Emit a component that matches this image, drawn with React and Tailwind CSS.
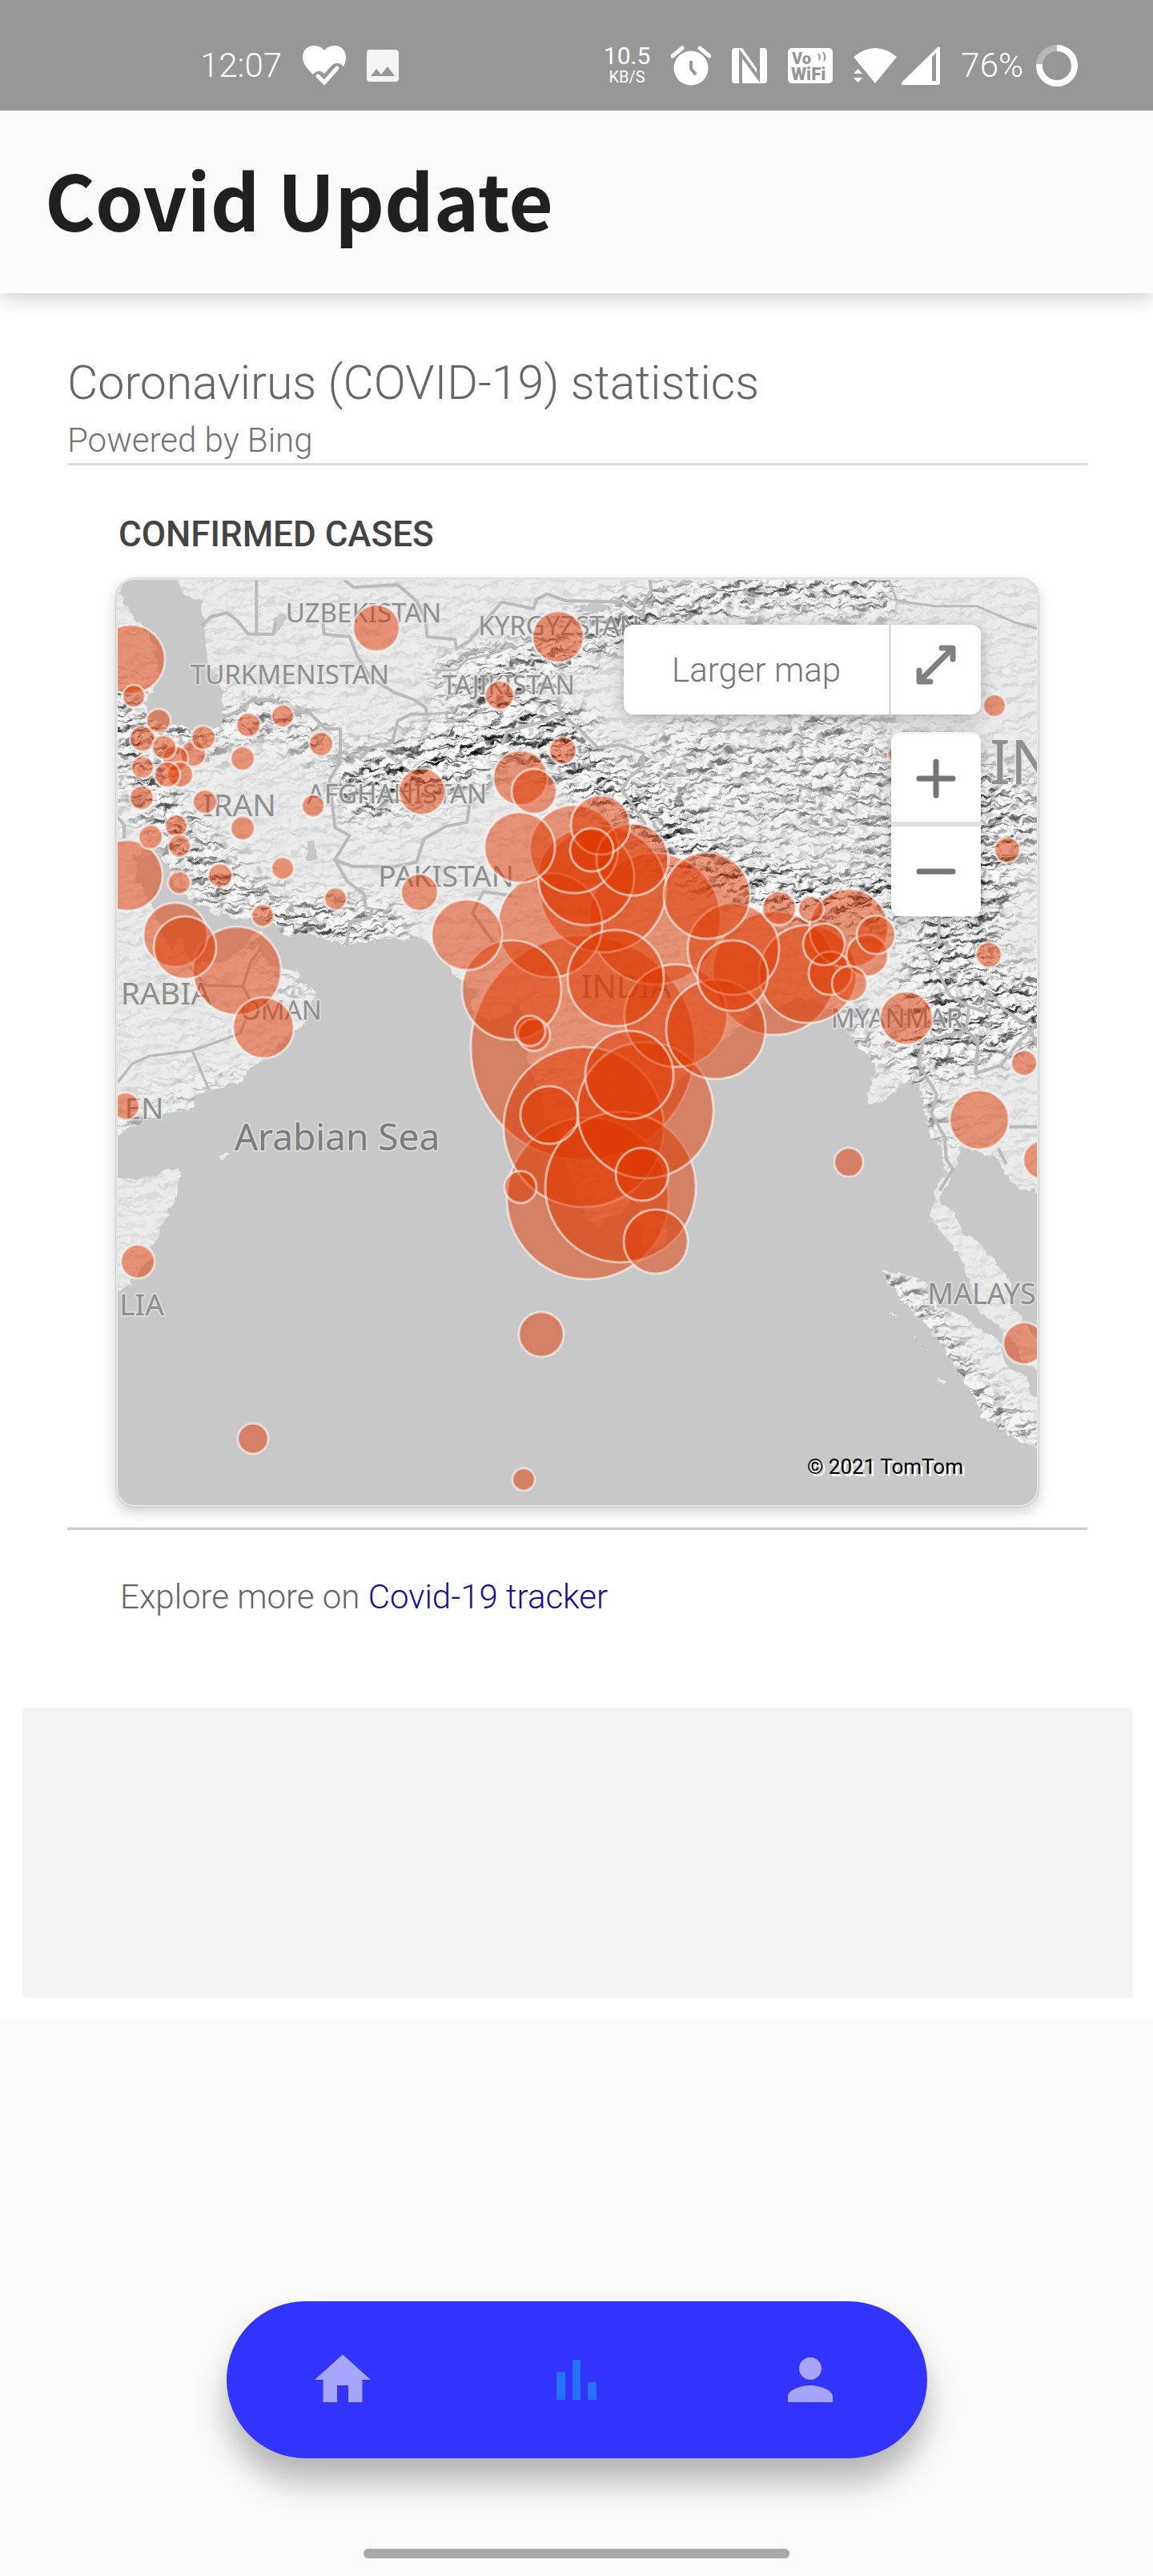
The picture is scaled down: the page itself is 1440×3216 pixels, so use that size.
import React from "react";
import { MdHome, MdPerson } from "react-icons/md";

/* [x, y, radius] of each case marker in map units */
const MARKERS = [
  [163, 823, 43], [167, 869, 14], [198, 900, 15], [178, 922, 16], [254, 921, 15], [241, 941, 16],
  [205, 933, 15], [219, 947, 16], [225, 967, 16], [209, 967, 16], [178, 958, 14], [177, 996, 15],
  [310, 905, 15], [353, 894, 14], [303, 947, 15], [401, 929, 15], [256, 1001, 15], [470, 784, 29],
  [624, 868, 18], [527, 988, 29], [391, 1006, 14], [303, 1034, 15], [220, 1031, 14], [224, 1056, 14],
  [188, 1045, 15], [159, 1093, 44], [224, 1102, 14], [275, 1093, 15], [353, 1084, 14], [419, 1122, 14],
  [328, 1143, 14], [524, 1114, 23], [219, 1167, 40], [231, 1183, 39], [296, 1212, 55], [329, 1283, 38],
  [157, 1381, 17], [172, 1575, 21], [697, 795, 32], [703, 937, 17], [650, 971, 34], [667, 988, 28],
  [649, 1058, 44], [717, 1060, 55], [750, 1030, 37], [739, 1061, 27], [732, 1095, 60], [790, 1073, 45],
  [753, 1110, 79], [818, 1147, 82], [687, 1155, 65], [583, 1167, 44], [883, 1118, 54], [1242, 881, 14],
  [1123, 941, 14], [1258, 1061, 16], [1235, 1192, 16], [973, 1134, 21], [1013, 1135, 16], [1060, 1159, 49],
  [1094, 1167, 24], [1083, 1193, 26], [1029, 1179, 26], [1037, 1215, 27], [1061, 1228, 22], [1009, 1216, 61],
  [967, 1215, 77], [915, 1218, 44], [1132, 1271, 33], [1279, 1327, 16], [1223, 1398, 37], [1060, 1451, 18],
  [1302, 1448, 24], [916, 1185, 57], [639, 1236, 62], [769, 1221, 60], [844, 1268, 64], [894, 1285, 62],
  [728, 1308, 140], [662, 1287, 19], [667, 1292, 20], [729, 1407, 100], [786, 1342, 55], [806, 1386, 85],
  [686, 1392, 36], [734, 1496, 101], [775, 1482, 94], [802, 1466, 33], [650, 1482, 20], [819, 1550, 40],
  [676, 1666, 28], [316, 1796, 19], [654, 1847, 14], [1279, 1677, 26],
].sort((a, b) => b[2] - a[2]);

/* [text, centre x, baseline y, size] */
const LABELS = [
  ["UZBEKISTAN", 454, 777, 33], ["TURKMENISTAN", 362, 854, 33], ["KYRGYZSTAN", 698, 793, 33],
  ["TAJIKISTAN", 635, 867, 32], ["IRAN", 299, 1019, 39], ["AFGHANISTAN", 496, 1003, 33],
  ["PAKISTAN", 557, 1107, 37], ["INDIA", 782, 1246, 40], ["RABIA", 207, 1254, 39],
  ["OMAN", 351, 1273, 33], ["EN", 180, 1397, 37], ["LIA", 177, 1642, 37],
  ["MYANMAR", 1120, 1283, 33], ["MALAYS", 1226, 1628, 36],
];

const LAND =
  "M130 700H1320V1487H1295L1273 1485 1260 1473 1247 1450 1230 1440 1213 1437 1200 1427 1195 1453 1187 1470 1173 1493 1177 1507 1193 1513 1197 1530 1203 1537 1230 1560 1244 1577 1261 1597 1265 1630 1280 1653 1300 1680V1712L1280 1700 1258 1667 1244 1653 1224 1640 1210 1597 1203 1577 1193 1560 1179 1543 1162 1523 1163 1507 1170 1483 1180 1463 1177 1433 1163 1420 1153 1383 1150 1360 1137 1346 1133 1350 1103 1378 1083 1375 1090 1345 1093 1330 1075 1310 1060 1290 1045 1262 1020 1250 1000 1245 970 1258 940 1250 935 1270 915 1292 890 1310 850 1345 815 1390 803 1430 797 1457 789 1493 780 1511 760 1521 747 1532 730 1518 717 1478 703 1439 683 1393 667 1350 657 1314 655 1290 647 1245 640 1265 610 1275 585 1255 600 1236 583 1230 570 1217 553 1200 540 1182 528 1172 473 1173 430 1180 393 1168 353 1165 338 1152 327 1140 313 1147 273 1143 240 1125 220 1107 210 1083 200 1065 165 1068 170 1097 187 1127 193 1143 205 1170 216 1186 220 1168 228 1172 232 1190 240 1200 273 1203 293 1193 313 1170 327 1163 322 1183 340 1207 370 1212 393 1240 380 1273 370 1287 353 1300 333 1323 307 1335 303 1350 263 1360 247 1367 242 1383 203 1392 173 1403 130 1425Z" +
  "M1101 1587L1141 1593 1155 1603 1165 1627 1196 1640 1224 1660 1248 1677 1262 1710 1284 1717 1286 1740 1310 1750V1816L1265 1797 1227 1767 1203 1720 1175 1680 1151 1647 1120 1617Z" +
  "M130 1474L187 1470 220 1457 225 1463 222 1487 203 1527 187 1570 167 1597 130 1625Z" +
  "M270 1443L288 1441 275 1449ZM1140 1668L1154 1680 1153 1682 1144 1676ZM1112 1640L1122 1646 1114 1645ZM1171 1714L1180 1730 1175 1729ZM797 1508L815 1512 833 1530 836 1548 822 1558 806 1556 800 1535Z";

const CASPIAN =
  "M150 720V737L160 760 172 777 190 800 200 830 190 862 180 880 187 897 212 905 237 909 280 905 278 890 278 860 258 827 257 790 252 750 227 740 222 720Z";

function CaseMap() {
  return (
    <svg viewBox="147 724 1148 1155" preserveAspectRatio="xMidYMid slice" className="block h-full w-full" role="img" aria-label="Map of confirmed cases">
      <defs>
        <clipPath id="land"><path d={LAND} /></clipPath>
        <filter id="coast" x="0" y="0" width="100%" height="100%">
          <feTurbulence type="fractalNoise" baseFrequency="0.08" numOctaves="3" seed="4" />
          <feDisplacementMap in="SourceGraphic" scale="12" xChannelSelector="R" yChannelSelector="G" />
        </filter>
        <filter id="relief" x="0" y="0" width="100%" height="100%" colorInterpolationFilters="sRGB">
          <feTurbulence type="fractalNoise" baseFrequency="0.04 0.08" numOctaves="3" seed="11" result="n" />
          <feColorMatrix in="n" type="matrix" values="0 0 0 0 0  0 0 0 0 0  0 0 0 0 0  1 0 0 0 0" />
          <feDiffuseLighting surfaceScale="11" diffuseConstant="1.08" lightingColor="#ffffff">
            <feDistantLight azimuth="235" elevation="61" />
          </feDiffuseLighting>
        </filter>
        <filter id="soft" x="-10%" y="-10%" width="120%" height="120%"><feGaussianBlur stdDeviation="18" /></filter>
        <mask id="ranges" maskUnits="userSpaceOnUse" x="130" y="700" width="1190" height="1200">
          <rect x="130" y="700" width="1190" height="1200" fill="#181818" />
          <g filter="url(#soft)" fill="none" stroke="#ddd" strokeLinecap="round" strokeLinejoin="round">
            <path d="M140 880L190 990 260 1090 340 1150 480 1160" strokeWidth="50" />
            <path d="M150 890L240 925 330 890 400 930" strokeWidth="30" />
            <path d="M460 980L560 950 640 900 700 920" strokeWidth="75" stroke="#fff" />
            <path d="M570 850L660 830 800 770 960 735 1100 740" strokeWidth="45" />
            <path d="M690 930L780 1000 900 1090 1080 1130 1180 1060" strokeWidth="60" stroke="#fff" />
            <path d="M860 960L1080 1000 1180 1040" strokeWidth="120" stroke="#888" />
            <path d="M1000 900L1270 1000" strokeWidth="50" stroke="#888" />
            <path d="M1245 1010L1190 1170 1180 1290 1270 1260" strokeWidth="100" />
            <path d="M1060 1270L1090 1310M1130 1310L1170 1420" strokeWidth="24" />
            <path d="M1105 1595L1160 1655 1210 1735 1290 1805" strokeWidth="24" stroke="#fff" />
            <path d="M350 1212L385 1235M240 1362L290 1360M150 1410L230 1390" strokeWidth="14" />
            <path d="M665 1330L705 1430 730 1500" strokeWidth="10" stroke="#888" />
          </g>
        </mask>
      </defs>

      <rect x="147" y="724" width="1148" height="1155" fill="#c8c8c8" />
      <g filter="url(#coast)">
        <path d={LAND} fill="#ebebeb" />
        <g clipPath="url(#land)">
          <g mask="url(#ranges)">
            <rect x="130" y="700" width="1190" height="1200" filter="url(#relief)" />
          </g>
        </g>
        <path d={CASPIAN} fill="#c8c8c8" />
        <path d="M341 775L352 765 358 772 350 784 342 790ZM384 1050H396V1072L384 1076ZM722 755L745 750 763 757 745 766 730 764Z" fill="#c8c8c8" />
      </g>

      <g fill="none" stroke="#bababa" strokeWidth="12" strokeLinejoin="round">
        <g transform="translate(140 710) scale(.3333)">
          <path d="M335 215L370 180 430 165 470 195 510 245 605 245 612 200M541 42V245M790 200L795 245 890 255 920 330 970 410 1060 465 1130 490 1175 520 1180 545 1120 545 1070 570 1050 650 970 670 930 710 855 685 855 600 800 600 740 540 680 530 600 490 520 495 470 535 420 555" />
          <path d="M855 685L845 740 815 790 835 970 890 1000 835 1090 900 1115 1060 1115 1140 1100 1170 1010 1250 965 1330 950 1340 880 1430 800M835 1090L880 1170 945 1220 950 1270 975 1275 965 1310 890 1325 880 1410" />
          <path d="M870 42L905 70 1070 60 1140 120 1175 190 1180 255 1285 265 1290 300 1340 270 1430 160 1460 125 1580 150 1590 115 1630 95 1700 120 1910 125 1990 180 1995 120 2020 80 2015 42" />
          <path d="M1180 545L1250 540 1260 575 1350 555 1400 520M1290 380L1330 340 1420 320 1500 290M1290 380H1200" strokeWidth="9" />
          <path d="M20 930L45 960 45 1010M1670 480L1680 540 1750 600 1820 670 1900 660 1990 690 1990 740 1940 780 1910 830 1960 900 2000 960M1460 660L1480 610 1590 580 1680 540M1500 1225L1390 1210 1350 1290 1400 1360 1430 1400" />
        </g>
        <g transform="translate(140 1150) scale(.3333)">
          <path d="M20 605L75 535 140 505 300 485 400 450 480 420 500 370 515 290 490 245 350 240 290 170M490 245L520 150 560 100M300 485L360 625" strokeWidth="10" />
        </g>
        <g transform="translate(900 1100) scale(.3333)">
          <path d="M820 130L815 240 760 240 820 350 860 430 930 470 920 560 965 600 955 720 1050 690 1120 600 1190 530M930 470L990 490 1000 410 1060 480 1150 540 1190 620M920 560L760 600 740 680 810 800 790 870 840 960 845 1040 870 1080 820 1160M1080 920H1190M1040 1000L1070 1060" />
          <path d="M630 -1128L660 -1050 800 -1030 960 -1030 1100 -970 1190 -945" strokeWidth="9" />
        </g>
      </g>

      <g fontFamily="'Noto Sans', sans-serif" fill="#8f8f8f" stroke="#e6e6e6" strokeOpacity="0.6" strokeWidth="4" strokeLinejoin="round" paintOrder="stroke" textAnchor="middle">
        {LABELS.map(([t, x, y, s]) => (
          <text key={t} x={x} y={y} fontSize={s}>{t}</text>
        ))}
        <text x="1236" y="979" fontSize="76" textAnchor="start">IN</text>
        <text x="421" y="1436" fontSize="46" fill="#7d7d7d">Arabian Sea</text>
      </g>

      <g fill="#dd3800" fillOpacity="0.5" stroke="#ffffff" strokeOpacity="0.55" strokeWidth="3">
        {MARKERS.map(([x, y, r]) => (
          <circle key={`${x}-${y}`} cx={x} cy={y} r={r} />
        ))}
      </g>
    </svg>
  );
}

function StatusBar() {
  return (
    <header className="relative z-20 flex h-[138px] items-center justify-between bg-[#979797] pt-[26px] pr-[94px] pl-[250px] text-white">
      <div className="flex items-center gap-[26px]">
        <span className="text-[42px] leading-none font-light">12:07</span>
        <svg viewBox="0 0 54 50" className="h-[50px] w-[54px]">
          <path d="M13 36C4 27 0 22 0 14 0 6 6 0 14 0c5 0 10 2 13 6C30 2 35 0 40 0c8 0 14 6 14 14 0 5-1 8-3 12-5-6-11-5-15-1l-9 10c-5-5-10-4-14 1Z" fill="#fff" />
          <path d="m19 38 8 8 16-18" fill="none" stroke="#fff" strokeWidth="5" strokeLinecap="round" />
        </svg>
        <svg viewBox="0 0 40 40" className="h-10 w-10">
          <path fillRule="evenodd" d="M4 0h32a4 4 0 0 1 4 4v32a4 4 0 0 1-4 4H4a4 4 0 0 1-4-4V4a4 4 0 0 1 4-4Zm1 33h30L26 21l-8 10-6-7Z" fill="#f4f4f4" />
        </svg>
      </div>
      <div className="flex items-center gap-[26px]">
        <div className="flex flex-col items-center">
          <span className="text-[30px] leading-7">10.5</span>
          <span className="text-xl leading-6">KB/S</span>
        </div>
        <svg viewBox="0 0 50 50" className="h-[50px] w-[50px]">
          <path d="M2 13 14 3M48 13 36 3" stroke="#fff" strokeWidth="5" strokeLinecap="round" />
          <circle cx="25" cy="28" r="21.500" fill="#fff" />
          <path d="M25 19v10l6 7" fill="none" stroke="#979797" strokeWidth="4" />
        </svg>
        <svg viewBox="0 0 44 44" className="h-11 w-11">
          <path d="M4 0h9l19 27V4h3V0h5a4 4 0 0 1 4 4v36a4 4 0 0 1-4 4H4a4 4 0 0 1-4-4V4a4 4 0 0 1 4-4Z" fill="#fff" />
          <path d="M32 0h3v4h-3Z" fill="#fff" />
          <path d="M11 44V7L33 37V0" fill="none" stroke="#979797" strokeWidth="4" />
        </svg>
        <svg viewBox="0 0 56 44" className="h-11 w-14">
          <rect width="56" height="44" rx="5" fill="#fff" />
          <g fill="#979797" fontFamily="Roboto, sans-serif" fontWeight="900">
            <text x="5" y="20" fontSize="20">Vo</text>
            <text x="4" y="40" fontSize="22">WiFi</text>
          </g>
          <path d="M38 7q3 4 1 8M44 5q4 6 1 11" fill="none" stroke="#979797" strokeWidth="2" />
        </svg>
        <div className="flex items-center gap-1.5">
          <svg viewBox="0 0 54 44" className="h-11 w-[54px]">
            <path d="M0 11Q27-11 54 11L27 44Z" fill="#fff" />
            <path d="M0 32 5.500 26 11 32ZM0 37H11L5.500 43Z" fill="#fff" />
          </svg>
          <svg viewBox="0 0 48 48" className="h-12 w-12">
            <path fillRule="evenodd" d="M48 1V45q0 3-3 3H1Q-1 46 1 44L45 1q2-1 3 0ZM38 13V43H43V8Z" fill="#fff" />
          </svg>
        </div>
        <div className="flex items-center gap-4">
          <span className="text-[42px] leading-none font-light">76%</span>
          <svg viewBox="0 0 52 52" className="h-[52px] w-[52px] -rotate-90">
            <circle cx="26" cy="26" r="22" fill="none" stroke="#b7b7b7" strokeWidth="8" />
            <circle cx="26" cy="26" r="22" fill="none" stroke="#fff" strokeWidth="8" strokeDasharray="105 200" />
          </svg>
        </div>
      </div>
    </header>
  );
}

const round = "fill-none stroke-[7] [stroke-linecap:round] [stroke-linejoin:round]";

export default function App() {
  return (
    <div className="flex min-h-screen flex-col bg-[#fbfbfb] font-['Roboto',sans-serif]">
      <StatusBar />
      <div className="relative z-10 flex h-[228px] items-center bg-[#fbfbfb] px-[56px] pb-2 shadow-[0_4px_24px_rgba(0,0,0,0.22)]">
        <h1 className="font-['Noto_Sans_CJK_SC',sans-serif] text-[96px] leading-none font-bold text-[#202020]">Covid Update</h1>
      </div>

      <main className="bg-white pt-[72px] pr-[26px] pb-7 pl-7">
        <section className="px-14">
          <div className="border-b-3 border-[#dddddd]">
            <h2 className="text-[59px] leading-[80px] font-light text-[#666666]">Coronavirus (COVID-19) statistics</h2>
            <p className="pt-1 text-[42px] leading-[56px] font-light text-[#737373]">Powered by Bing</p>
          </div>
          <div className="border-b-3 border-[#cccccc] px-[60px] pt-14 pb-[25px]">
            <h3 className="px-1 text-[44px] leading-[60px] font-medium text-[#444444]">CONFIRMED CASES</h3>
            <div className="relative mt-6 aspect-[1154/1161] overflow-hidden rounded-3xl border-3 border-black/10 bg-white bg-clip-padding shadow-[0_6px_16px_rgba(0,0,0,0.18)]">
              <CaseMap />
              <div className="absolute top-14 right-[70px] flex h-28 overflow-hidden rounded-xl bg-white text-[#757575] shadow-[0_4px_20px_rgba(0,0,0,0.25)]">
                <button type="button" className="border-r-3 border-[#dddddd] px-[60px] text-[42px] font-light">Larger map</button>
                <button type="button" aria-label="Expand map" className="flex w-28 items-center justify-center pb-3">
                  <svg viewBox="0 0 50 50" className={`h-[50px] w-[50px] stroke-[#808080] ${round}`}>
                    <path d="M6 44 44 6M32 4H46V18M4 32V46H18" />
                  </svg>
                </button>
              </div>
              <div className="absolute top-[190px] right-[70px] flex w-28 flex-col overflow-hidden rounded-xl border-t-3 border-[#f4f4f4] bg-white shadow-[0_4px_20px_rgba(0,0,0,0.25)]">
                <button type="button" aria-label="Zoom in" className="flex h-[115px] items-center justify-center border-b-6 border-[#e2e2e2]">
                  <svg viewBox="0 0 50 50" className={`h-[50px] w-[50px] stroke-[#757575] ${round}`}><path d="M4 25H46M25 4V46" /></svg>
                </button>
                <button type="button" aria-label="Zoom out" className="flex h-28 items-center justify-center">
                  <svg viewBox="0 0 50 50" className={`h-[50px] w-[50px] stroke-[#757575] ${round}`}><path d="M4 25H46" /></svg>
                </button>
              </div>
              <small className="absolute right-[92px] bottom-8 text-[26px] leading-8 text-black [text-shadow:3px_3px_0_#fff]">© 2021 TomTom</small>
            </div>
          </div>
          <p className="px-[66px] pt-[54px] text-[42px] leading-[60px] font-light text-[#666666]">
            Explore more on <a href="#tracker" className="text-[#1a0d91]">Covid-19 tracker</a>
          </p>
        </section>
        <div className="mt-[108px] h-[362px] bg-[#f4f4f4]" />
      </main>

      <nav aria-label="Main" className="mx-auto mt-auto flex h-[196px] w-[875px] max-w-[90%] rounded-full bg-[#3333ff] text-[84px] text-[#a6a6ff] shadow-[0_30px_40px_rgba(0,0,0,0.28)]">
        <button type="button" aria-label="Home" className="flex flex-1 items-center justify-center"><MdHome /></button>
        <button type="button" aria-label="Statistics" className="flex flex-1 items-center justify-center text-[#2472ff]">
          <svg viewBox="0 0 50 50" fill="currentColor" className="h-[50px] w-[50px]">
            <path d="M0 15H11V50H0ZM20 0H30V50H20ZM39 28H50V50H39Z" />
          </svg>
        </button>
        <button type="button" aria-label="Profile" className="flex flex-1 items-center justify-center"><MdPerson /></button>
      </nav>
      <div className="mx-auto mt-[113px] mb-[22px] h-3 w-[532px] max-w-[50%] rounded-full bg-[#a8a8a8]" />
    </div>
  );
}
